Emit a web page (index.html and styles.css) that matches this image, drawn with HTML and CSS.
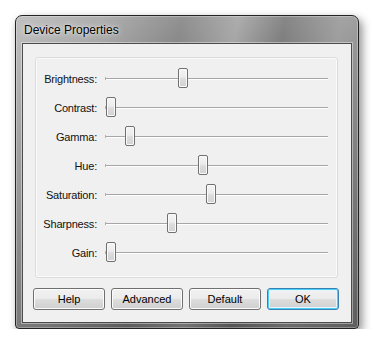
FILE: index.html
```html
<!DOCTYPE html>
<html lang="en">
<head>
  <meta charset="UTF-8" />
  <title>Device Properties</title>
  <link rel="stylesheet" href="styles.css">
</head>
<body>
  <div class="window">
    <div class="titlebar">
      <span class="title">Device Properties</span>
    </div>
    <div class="client">
      <div class="panel">
        <div class="row">
          <span class="label">Brightness:</span>
          <div class="slider"><div class="track"></div><div class="thumb" style="left: 73px;"></div></div>
        </div>
        <div class="row">
          <span class="label">Contrast:</span>
          <div class="slider"><div class="track"></div><div class="thumb" style="left: 1px;"></div></div>
        </div>
        <div class="row">
          <span class="label">Gamma:</span>
          <div class="slider"><div class="track"></div><div class="thumb" style="left: 20px;"></div></div>
        </div>
        <div class="row">
          <span class="label">Hue:</span>
          <div class="slider"><div class="track"></div><div class="thumb" style="left: 93px;"></div></div>
        </div>
        <div class="row">
          <span class="label">Saturation:</span>
          <div class="slider"><div class="track"></div><div class="thumb" style="left: 101px;"></div></div>
        </div>
        <div class="row">
          <span class="label">Sharpness:</span>
          <div class="slider"><div class="track"></div><div class="thumb" style="left: 62px;"></div></div>
        </div>
        <div class="row">
          <span class="label">Gain:</span>
          <div class="slider"><div class="track"></div><div class="thumb" style="left: 1px;"></div></div>
        </div>
      </div>
      <div class="buttons">
        <button>Help</button>
        <button>Advanced</button>
        <button>Default</button>
        <button class="default">OK</button>
      </div>
    </div>
  </div>
</body>
</html>
```

FILE: styles.css
```css
body {
  margin: 0;
  padding: 15px 0 0 15px;
  background: #ffffff;
  font-family: 'Liberation Sans', Arial, sans-serif;
  color: #000;
}

.window {
  width: 344px;
  height: 314px;
  box-sizing: border-box;
  padding: 0 6px 5px 6px;
  border: 1px solid #232323;
  border-radius: 7px 7px 4px 4px;
  background:
    linear-gradient(180deg, rgba(255,255,255,0.1) 0%, rgba(0,0,0,0) 12%, rgba(0,0,0,0.3) 100%),
    linear-gradient(100deg, #b9b9b9 0%, #a6a6a6 22%, #858585 42%, #a4a4a4 56%, #7a7a7a 68%, #9a9a9a 82%, #868686 100%);
  box-shadow: inset 0 0 0 1px rgba(255,255,255,0.3), 3px 4px 10px rgba(0,0,0,0.45);
}

.titlebar {
  height: 27px;
  display: flex;
  align-items: center;
  padding-left: 2px;
}

.title {
  font-size: 12px;
  text-shadow: 0 0 6px rgba(255,255,255,0.9), 0 0 2px rgba(255,255,255,0.7);
}

.client {
  width: 330px;
  height: 280px;
  box-sizing: border-box;
  border: 1px solid #4c4c4c;
  background: #f0f0f0;
  box-shadow: 0 0 0 1px rgba(255,255,255,0.4);
  padding: 13px 0 0 10px;
}

.panel {
  width: 303px;
  height: 221px;
  box-sizing: border-box;
  margin-left: 2px;
  padding-top: 6px;
  border: 1px solid #dcdcdc;
  border-radius: 3px;
  box-shadow: inset 0 0 0 1px #fbfbfb;
}

.row {
  display: grid;
  grid-template-columns: 61px 223px;
  column-gap: 8px;
  align-items: center;
  height: 29px;
}

.label {
  font-size: 11px;
  text-align: right;
  letter-spacing: -0.2px;
  color: #111;
}

.slider {
  position: relative;
  height: 29px;
}

.track {
  position: absolute;
  left: 0;
  right: 0;
  top: 14px;
  height: 1px;
  background: #a6a6a6;
  border-bottom: 1px solid #ffffff;
}

.track::before {
  content: "";
  position: absolute;
  left: 0;
  top: -1px;
  width: 1px;
  height: 3px;
  background: #b0b0b0;
}

.thumb {
  position: absolute;
  top: 4px;
  width: 10px;
  height: 20px;
  box-sizing: border-box;
  border: 1px solid #707070;
  border-radius: 2px;
  background: linear-gradient(180deg, #f4f4f4 0%, #ececec 45%, #dcdcdc 55%, #d2d2d2 100%);
  box-shadow: inset 0 0 0 1px #fafafa;
}

.buttons {
  display: grid;
  grid-template-columns: repeat(4, 72px);
  column-gap: 6px;
  margin-top: 10px;
}

button {
  height: 22px;
  padding: 0;
  font-family: 'Liberation Sans', Arial, sans-serif;
  font-size: 11px;
  color: #000;
  border: 1px solid #707070;
  border-radius: 3px;
  background: linear-gradient(180deg, #f2f2f2 0%, #ebebeb 48%, #dddddd 52%, #cfcfcf 100%);
  box-shadow: inset 0 0 0 1px #fcfcfc;
}

button.default {
  border-color: #3c7fb1;
  box-shadow: inset 0 0 0 1px #48d1f8, inset 0 0 0 2px #e8f6fc;
}
```
